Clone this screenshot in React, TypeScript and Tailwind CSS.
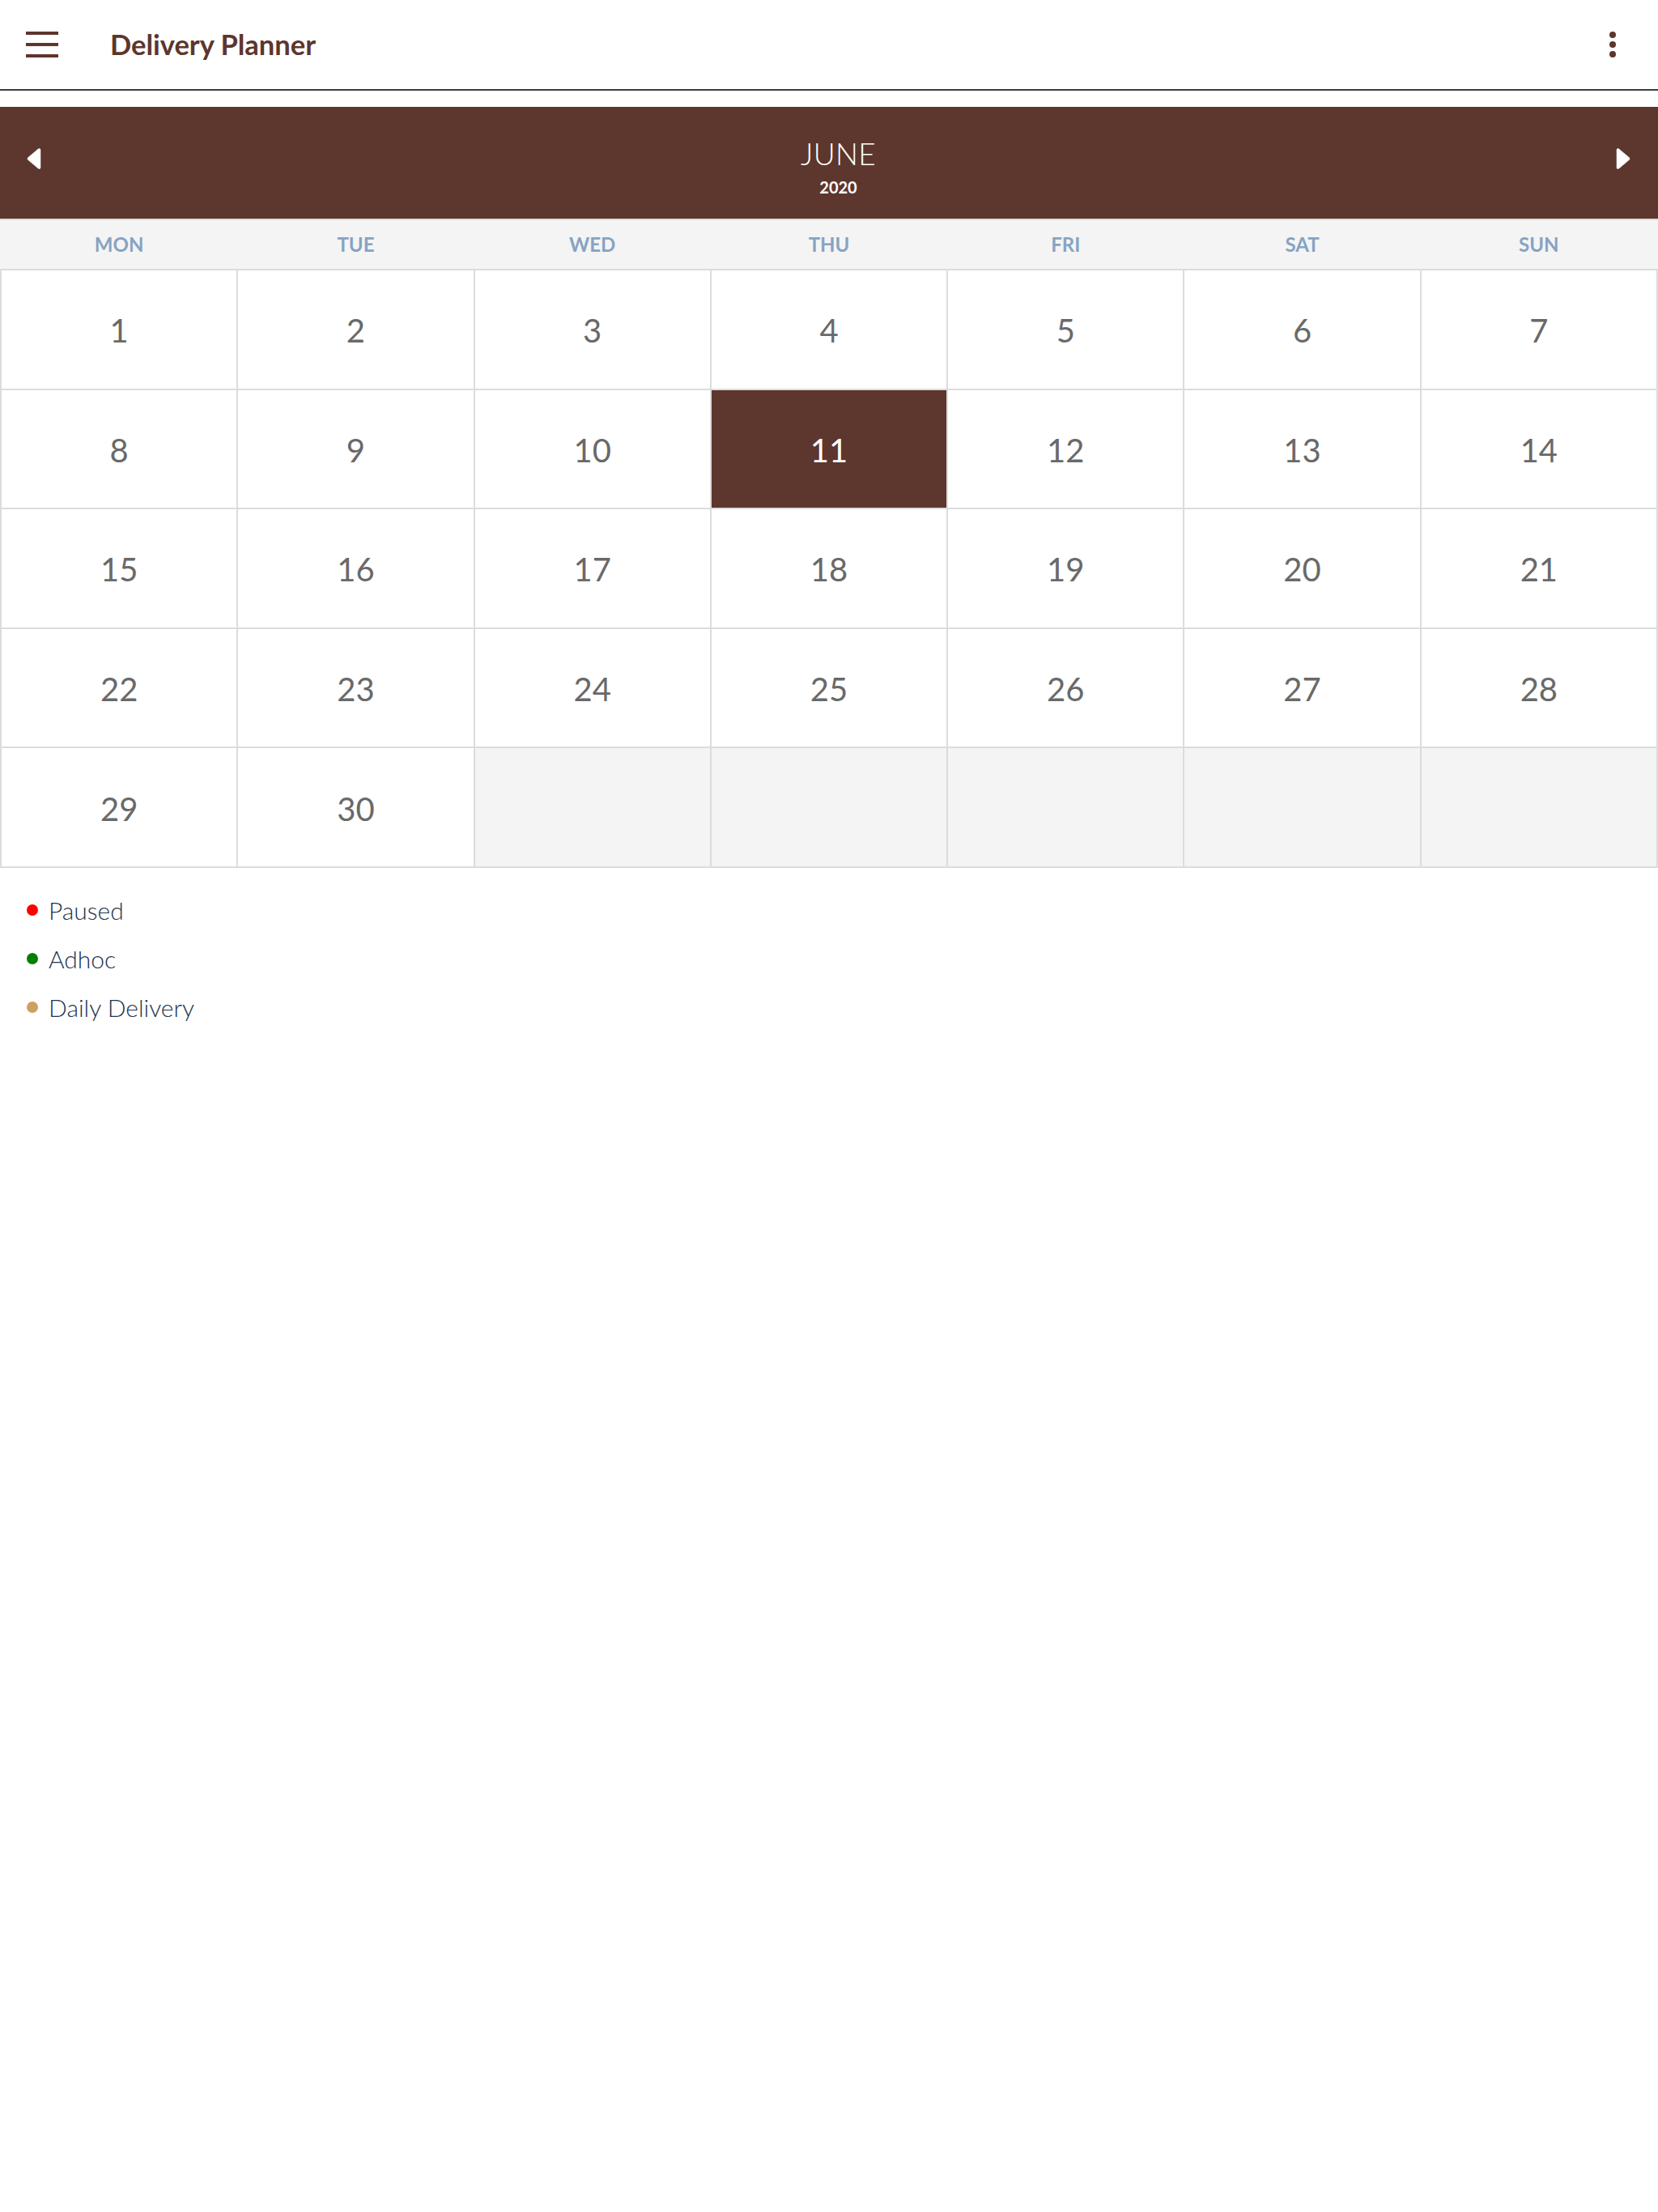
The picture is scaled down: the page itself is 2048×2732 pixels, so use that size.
import { IoCaretBack, IoCaretForward } from "react-icons/io5";

const DAYS = ["MON", "TUE", "WED", "THU", "FRI", "SAT", "SUN"];

const LEGEND = [
  { label: "Paused", dot: "bg-[#ff0000]" },
  { label: "Adhoc", dot: "bg-[#008000]" },
  { label: "Daily Delivery", dot: "bg-[#cf9f62]" },
];

export default function App() {
  const cells: (number | null)[] = [
    ...Array.from({ length: 30 }, (_, i) => i + 1),
    null,
    null,
    null,
    null,
    null,
  ];
  const selected = 11;

  return (
    <div className="min-h-screen bg-white font-['Lato','Liberation_Sans',sans-serif]">
      {/* Top app bar */}
      <header className="h-[112px] border-b-2 border-[#3c3c3c] flex items-center">
        <button className="ml-[32px] w-[40px] h-[32px] flex flex-col justify-between" aria-label="menu">
          <span className="block h-[4px] w-full bg-[#5d362d]" />
          <span className="block h-[4px] w-full bg-[#5d362d]" />
          <span className="block h-[4px] w-full bg-[#5d362d]" />
        </button>
        <h1 className="ml-[64px] text-[34.5px] font-bold leading-none text-[#5d362d]">Delivery Planner</h1>
        <button className="ml-auto mr-[52px] flex flex-col gap-[4px]" aria-label="more">
          <span className="block w-[8px] h-[8px] rounded-full bg-[#5d362d]" />
          <span className="block w-[8px] h-[8px] rounded-full bg-[#5d362d]" />
          <span className="block w-[8px] h-[8px] rounded-full bg-[#5d362d]" />
        </button>
      </header>

      {/* Month navigation */}
      <div className="mt-[20px] h-[138px] bg-[#5d362d] flex items-start">
        <button className="ml-[22px] mt-[44px] w-[40px] h-[40px] text-white" aria-label="previous month">
          <IoCaretBack size={40} />
        </button>
        <div className="flex-1 pl-[24px] pt-[39px] flex flex-col items-center text-white">
          <div className="text-[37px] font-light leading-none tracking-[0.3px]">JUNE</div>
          <div className="mt-[13px] text-[20px] font-bold leading-none">2020</div>
        </div>
        <button className="mr-[23px] mt-[44px] w-[40px] h-[40px] text-white" aria-label="next month">
          <IoCaretForward size={40} />
        </button>
      </div>

      {/* Weekday labels */}
      <div className="h-[62px] border-t-2 border-[#dcdcdc] bg-[#f4f4f4] grid grid-cols-7 gap-[2px] px-[2px] items-center">
        {DAYS.map((d) => (
          <div key={d} className="text-center text-[24px] font-bold leading-none text-[#86a3c2]">
            {d}
          </div>
        ))}
      </div>

      {/* Day grid */}
      <div className="grid grid-cols-7 gap-[2px] p-[2px] bg-[#dcdcdc]">
        {cells.map((n, i) => {
          if (n === null) {
            return <div key={i} className="h-[145.6px] bg-[#f4f4f4]" />;
          }
          const isSel = n === selected;
          return (
            <div
              key={i}
              className={
                isSel
                  ? "h-[145.6px] pt-[3px] bg-[#5d362d] flex items-center justify-center text-[40px] leading-none text-white"
                  : "h-[145.6px] pt-[3px] bg-white flex items-center justify-center text-[40px] leading-none text-[#696969]"
              }
            >
              {n}
            </div>
          );
        })}
      </div>

      {/* Legend */}
      <ul className="pt-[22px] pl-[33px]">
        {LEGEND.map((item) => (
          <li key={item.label} className="h-[60px] flex items-center gap-[13px]">
            <span className={`block w-[14px] h-[14px] rounded-full ${item.dot}`} />
            <span className="text-[30px] font-light leading-none text-[#22344f]">{item.label}</span>
          </li>
        ))}
      </ul>
    </div>
  );
}
